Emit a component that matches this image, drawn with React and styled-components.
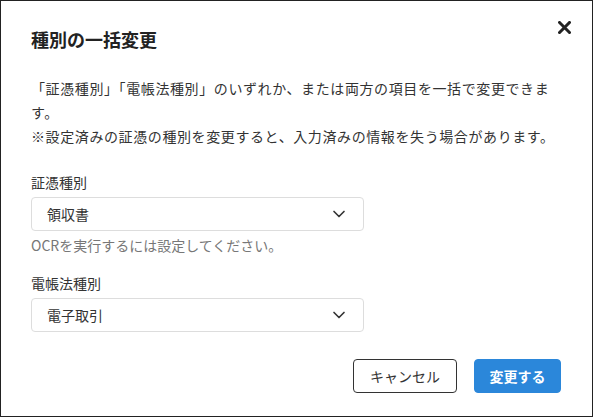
import styled, { createGlobalStyle } from "styled-components";
import { ChevronDown } from "lucide-react";

const GlobalStyle = createGlobalStyle`
  html, body {
    margin: 0;
    padding: 0;
    background: #fff;
  }
  body {
    font-family: "Noto Sans CJK JP", "Noto Sans", sans-serif;
    color: #333;
  }
  * {
    box-sizing: border-box;
  }
`;

export default function App() {
  return (
    <>
      <GlobalStyle />
      <Dialog>
        <Header>
          <Title>種別の一括変更</Title>
          <CloseButton aria-label="閉じる">
            <svg width="13" height="13" viewBox="0 0 13 13">
              <path
                d="M1.5 1.5 L11.5 11.5 M11.5 1.5 L1.5 11.5"
                stroke="#222"
                strokeWidth="3"
                strokeLinecap="square"
                fill="none"
              />
            </svg>
          </CloseButton>
        </Header>
        <Body>
          <Description>
            「証憑種別」「電帳法種別」のいずれか、または両方の項目を一括で変更できます。
            <br />
            ※設定済みの証憑の種別を変更すると、入力済みの情報を失う場合があります。
          </Description>
          {fields.map(({ label, value, help }) => (
            <Field key={label}>
              <Label>{label}</Label>
              <Select>
                <span>{value}</span>
                <ChevronDown size={20} strokeWidth={2} color="#333" />
              </Select>
              {help && <Help>{help}</Help>}
            </Field>
          ))}
        </Body>
        <Footer>
          <Button>キャンセル</Button>
          <Button primary>変更する</Button>
        </Footer>
      </Dialog>
    </>
  );
}

const fields = [
  {
    label: "証憑種別",
    value: "領収書",
    help: "OCRを実行するには設定してください。",
  },
  {
    label: "電帳法種別",
    value: "電子取引",
  },
];

const Dialog = styled.div`
  position: relative;
  width: 593px;
  height: 417px;
  border: 1px solid #222;
  background: #fff;
  display: flex;
  flex-direction: column;
`;

const Header = styled.div`
  padding: 25px 30px 0 30px;
`;

const Title = styled.h2`
  margin: 0;
  font-size: 18px;
  line-height: 26px;
  font-weight: 700;
  color: #222;
`;

const CloseButton = styled.button`
  position: absolute;
  top: 12px;
  right: 14px;
  width: 28px;
  height: 28px;
  padding: 0;
  border: none;
  background: none;
  display: flex;
  align-items: center;
  justify-content: center;
  cursor: pointer;
`;

const Body = styled.div`
  padding: 24px 30px 0 30px;
  display: flex;
  flex-direction: column;
`;

const Description = styled.p`
  margin: 0 0 24px;
  width: 532px;
  font-size: 14px;
  line-height: 24px;
  letter-spacing: 0.6px;
  color: #333;
`;

const Field = styled.div`
  display: flex;
  flex-direction: column;
  margin-bottom: 18px;
  &:last-child {
    margin-bottom: 0;
  }
`;

const Label = styled.label`
  font-size: 14px;
  line-height: 20px;
  color: #333;
  margin-bottom: 5px;
`;

const Select = styled.div`
  width: 333px;
  height: 34px;
  border: 1px solid #ddd;
  border-radius: 4px;
  padding: 0 14px 0 15px;
  display: flex;
  align-items: center;
  justify-content: space-between;
  font-size: 14px;
  color: #333;
`;

const Help = styled.div`
  margin-top: 4px;
  font-size: 14px;
  line-height: 20px;
  color: #777;
`;

const Footer = styled.div`
  margin-top: auto;
  padding: 0 31px 23px;
  display: flex;
  justify-content: flex-end;
  gap: 17px;
`;

const Button = styled.button`
  height: 34px;
  width: ${({ primary }) => (primary ? "87px" : "104px")};
  padding: 0;
  border-radius: 4px;
  font-family: inherit;
  font-size: 14px;
  font-weight: ${({ primary }) => (primary ? 700 : 400)};
  color: ${({ primary }) => (primary ? "#fff" : "#333")};
  background: ${({ primary }) => (primary ? "#2b87da" : "#fff")};
  border: 1px solid ${({ primary }) => (primary ? "#2b87da" : "#333")};
  cursor: pointer;
`;
